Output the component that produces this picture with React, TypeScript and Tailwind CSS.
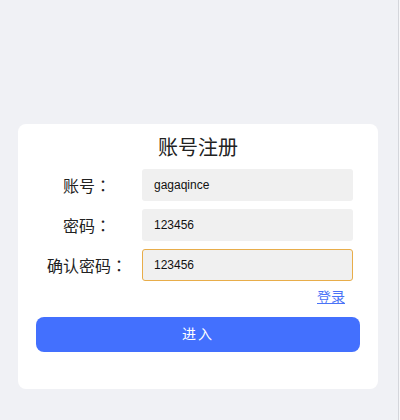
export default function App() {
  return (
    <div
      className="relative h-[420px] w-[400px] overflow-hidden bg-[#f0f1f5] pt-[124px]"
      style={{ fontFamily: '"Liberation Sans", "Noto Sans CJK SC", sans-serif' }}
    >
      <div className="absolute right-0 top-0 h-full w-[2px] border-l border-[#d4d6db] bg-[#f7f7f9]" />
      <div className="ml-[18px] h-[265px] w-[360px] rounded-lg bg-white px-[18px] pt-[10px]">
        <h1 className="text-center text-[20px] leading-[28px] text-[#222]">账号注册</h1>
        <div className="mt-[7px] flex flex-col gap-2">
          <Row label="账号：" value="gagaqince" />
          <Row label="密码：" value="123456" />
          <Row label="确认密码：" value="123456" focused />
        </div>
        <div className="mt-[6px] flex justify-end pr-[15px]">
          <a href="#" className="text-[14px] leading-[20px] text-[#4a73f7] underline">
            登录
          </a>
        </div>
        <button className="mt-[10px] h-[35px] w-full rounded-lg bg-[#4370fe] text-[14px] tracking-[2px] text-white">
          进入
        </button>
      </div>
    </div>
  );
}

function Row({ label, value, focused }: { label: string; value: string; focused?: boolean }) {
  return (
    <div className="flex items-center">
      <label className="w-[102px] text-center font-['Noto_Sans_CJK_TC',sans-serif] text-[16px] text-[#222]">
        {label}
      </label>
      <input
        readOnly
        defaultValue={value}
        className={
          "ml-[4px] h-[32px] w-[211px] rounded-[3px] bg-[#f0f0f0] px-[11px] text-[12px] text-[#111] outline-none " +
          (focused ? "border border-[#e8ad4a]" : "border border-transparent")
        }
      />
    </div>
  );
}
